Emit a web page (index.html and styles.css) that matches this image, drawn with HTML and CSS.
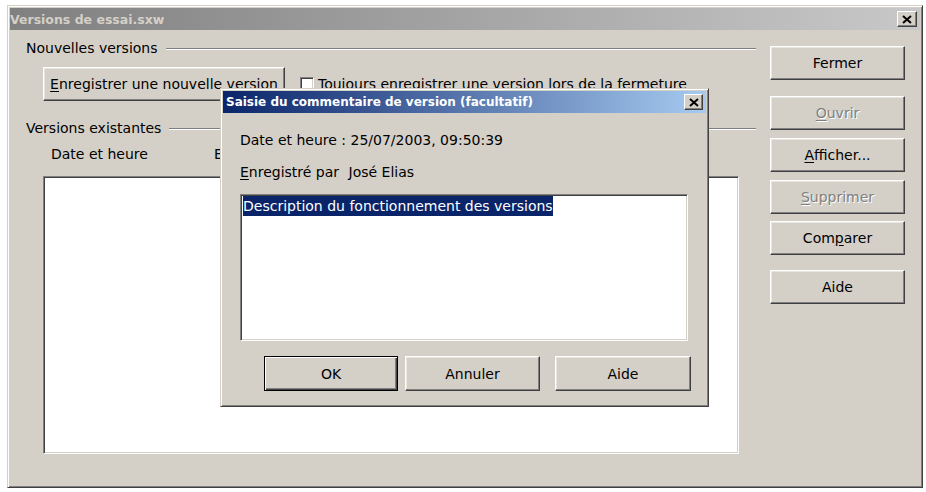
FILE: index.html
```html
<!DOCTYPE html>
<html lang="fr">
<head>
<meta charset="utf-8">
<title>Versions de essai.sxw</title>
<link rel="stylesheet" href="styles.css">
</head>
<body>
<div class="window">
  <div class="titlebar inactive">
    <span class="title">Versions de essai.sxw</span>
    <span class="capbtn main-close"><svg width="10" height="9" viewBox="0 0 10 9"><path d="M1 1 L9 8 M9 1 L1 8" stroke="#000" stroke-width="2" fill="none"/></svg></span>
  </div>
  <div class="win-body">
    <div class="left-col">
      <div class="group-head"><span>Nouvelles versions</span></div>
      <div class="new-row">
        <div class="btn btn-new"><span><u>E</u>nregistrer une nouvelle version</span></div>
        <div class="check"><span class="check-box"></span><span class="check-label">Toujours enregistrer une version lors de la fermeture</span></div>
      </div>
      <div class="group-head group-head-2"><span>Versions existantes</span></div>
      <div class="cols">
        <span class="col-date">Date et heure</span>
        <span class="col-author">Enregistré par</span>
      </div>
      <div class="listbox"></div>
    </div>
    <div class="right-col">
      <div class="btn side btn-fermer"><span>Fermer</span></div>
      <div class="btn side disabled btn-ouvrir"><span><u>O</u>uvrir</span></div>
      <div class="btn side btn-afficher"><span><u>A</u>fficher...</span></div>
      <div class="btn side disabled btn-supprimer"><span><u>S</u>upprimer</span></div>
      <div class="btn side btn-comparer"><span>Com<u>p</u>arer</span></div>
      <div class="btn side btn-aide"><span>Aide</span></div>
    </div>
  </div>
</div>

<div class="dialog">
  <div class="titlebar active">
    <span class="title">Saisie du commentaire de version (facultatif)</span>
    <span class="capbtn dlg-close"><svg width="10" height="9" viewBox="0 0 10 9"><path d="M1 1 L9 8 M9 1 L1 8" stroke="#000" stroke-width="2" fill="none"/></svg></span>
  </div>
  <div class="dlg-body">
    <div class="dlg-line dlg-date">Date et heure : 25/07/2003, 09:50:39</div>
    <div class="dlg-line dlg-author"><u>E</u>nregistré par <span class="author-name">José Elias</span></div>
    <div class="textarea"><span class="selected">Description du fonctionnement des versions</span></div>
    <div class="dlg-buttons">
      <div class="btn dlg-btn default"><span>OK</span></div>
      <div class="btn dlg-btn btn-annuler"><span>Annuler</span></div>
      <div class="btn dlg-btn btn-aide2"><span>Aide</span></div>
    </div>
  </div>
</div>
</body>
</html>
```

FILE: styles.css
```css
html, body {
  margin: 0;
  padding: 0;
  background: #ffffff;
}

body {
  font-family: "DejaVu Sans", "Noto Sans", sans-serif;
  font-size: 14px;
  color: #000;
  width: 926px;
  height: 492px;
  overflow: hidden;
}

u {
  text-decoration: underline;
  text-underline-offset: 2px;
}

/* ---------- windows ---------- */
.window {
  box-sizing: border-box;
  margin: 5px 0 0 7px;
  width: 916px;
  height: 483px;
  background: #d4d0c8;
  border: 1px solid;
  border-color: #d4d0c8 #404040 #404040 #d4d0c8;
  box-shadow: inset 1px 1px #ffffff, inset -1px -1px #808080;
  padding: 2px;
}

.titlebar {
  height: 22px;
  display: flex;
  align-items: center;
  justify-content: space-between;
  padding: 0 3px 0 0;
}

.titlebar .title {
  font-family: "DejaVu Sans", sans-serif;
  font-weight: bold;
  font-size: 12.5px;
  white-space: nowrap;
}

.titlebar.inactive {
  background: linear-gradient(to right, #808080, #c8c8c8);
  color: #d4d0c8;
}

.titlebar.active {
  background: linear-gradient(to right, #0a246a, #a6caf0);
  color: #ffffff;
}

.capbtn {
  box-sizing: border-box;
  width: 20px;
  height: 16px;
  background: #d4d0c8;
  border: 1px solid;
  border-color: #ffffff #404040 #404040 #ffffff;
  box-shadow: inset -1px -1px #808080;
  display: flex;
  align-items: center;
  justify-content: center;
}

.capbtn svg {
  display: block;
}

.win-body {
  display: flex;
  padding-left: 16px;
}

.left-col {
  width: 730px;
  display: flex;
  flex-direction: column;
}

.right-col {
  width: 135px;
  margin-left: 14px;
  display: flex;
  flex-direction: column;
}

/* ---------- group headings ---------- */
.group-head {
  display: flex;
  align-items: center;
  height: 16px;
  line-height: 16px;
  margin-top: 10px;
  white-space: nowrap;
}

.group-head::after {
  content: "";
  flex: 1;
  height: 0;
  border-top: 1px solid #808080;
  border-bottom: 1px solid #ffffff;
  margin-left: 8px;
  margin-top: 2px;
}

.group-head-2 {
  margin-top: 19px;
}

/* ---------- buttons ---------- */
.btn {
  box-sizing: border-box;
  background: #d4d0c8;
  border: 1px solid;
  border-color: #ffffff #404040 #404040 #ffffff;
  box-shadow: inset -1px -1px #808080, inset 1px 1px #e8e6e0;
  display: flex;
  align-items: center;
  justify-content: center;
  white-space: nowrap;
  height: 34px;
}

.btn.disabled {
  color: #808080;
  text-shadow: 1px 1px 0 #ffffff;
}

.btn.default {
  border-color: #000000;
  box-shadow: inset 1px 1px #ffffff, inset -1px -1px #404040, inset -2px -2px #808080;
}

.new-row {
  display: flex;
  align-items: center;
  margin-top: 11px;
  margin-left: 17px;
}

.btn-new {
  width: 242px;
}

.check {
  display: flex;
  align-items: center;
  margin-left: 15px;
  white-space: nowrap;
}

.check-box {
  box-sizing: border-box;
  width: 14px;
  height: 14px;
  background: #ffffff;
  border: 1px solid;
  border-color: #808080 #ffffff #ffffff #808080;
  box-shadow: inset 1px 1px #404040, inset -1px -1px #d4d0c8;
  margin-right: 4px;
}

.cols {
  height: 16px;
  line-height: 16px;
  margin-top: 10px;
  display: flex;
  white-space: nowrap;
}

.col-date {
  margin-left: 25px;
  width: 163px;
}

.listbox {
  box-sizing: border-box;
  margin-top: 14px;
  margin-left: 17px;
  width: 696px;
  height: 278px;
  background: #ffffff;
  border: 1px solid;
  border-color: #808080 #ffffff #ffffff #808080;
  box-shadow: inset 1px 1px #404040, inset -1px -1px #d4d0c8;
}

.side {
  height: 34px;
}

.btn-fermer { margin-top: 16px; }
.btn-ouvrir { margin-top: 16px; }
.btn-afficher { margin-top: 8px; }
.btn-supprimer { margin-top: 8px; }
.btn-comparer { margin-top: 7px; }
.btn-aide { margin-top: 15px; }

/* ---------- dialog (overlay) ---------- */
.dialog {
  position: absolute;
  left: 220px;
  top: 88px;
  box-sizing: border-box;
  width: 489px;
  height: 319px;
  background: #d4d0c8;
  border: 1px solid;
  border-color: #d4d0c8 #404040 #404040 #d4d0c8;
  box-shadow: inset 1px 1px #ffffff, inset -1px -1px #808080;
  padding: 2px;
}

.dialog .titlebar {
  padding: 0 3px 0 3px;
}

.dialog .titlebar .title {
  font-size: 12px;
}

.dlg-close {
  width: 19px;
}

.dlg-body {
  padding-left: 17px;
  display: flex;
  flex-direction: column;
}

.dlg-line {
  height: 16px;
  line-height: 16px;
  white-space: nowrap;
}

.dlg-date {
  margin-top: 19px;
}

.dlg-author {
  margin-top: 16px;
}

.author-name {
  margin-left: 5px;
}

.textarea {
  box-sizing: border-box;
  margin-top: 14px;
  width: 448px;
  height: 147px;
  background: #ffffff;
  border: 1px solid;
  border-color: #808080 #ffffff #ffffff #808080;
  box-shadow: inset 1px 1px #404040, inset -1px -1px #d4d0c8;
  padding: 1px 2px;
}

.selected {
  display: inline-block;
  background: #0a246a;
  color: #ffffff;
  line-height: 20px;
  white-space: nowrap;
}

.dlg-buttons {
  display: flex;
  margin-top: 15px;
  margin-left: 24px;
}

.dlg-btn {
  height: 35px;
}

.default { width: 134px; }
.btn-annuler { width: 135px; margin-left: 7px; }
.btn-aide2 { width: 136px; margin-left: 15px; }
```
